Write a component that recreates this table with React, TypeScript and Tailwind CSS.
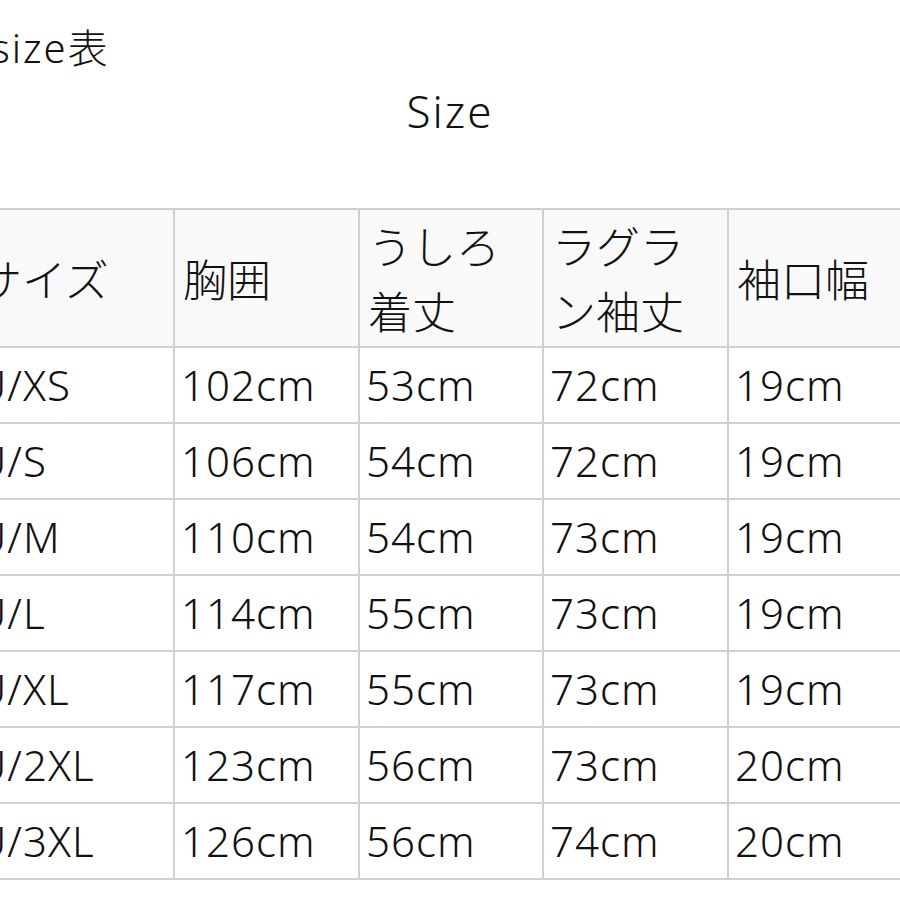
import React from "react";

const headers = ["サイズ", "胸囲", "うしろ着丈", "ラグラン袖丈", "袖口幅"];

const rows = [
  ["U/XS", "102cm", "53cm", "72cm", "19cm"],
  ["U/S", "106cm", "54cm", "72cm", "19cm"],
  ["U/M", "110cm", "54cm", "73cm", "19cm"],
  ["U/L", "114cm", "55cm", "73cm", "19cm"],
  ["U/XL", "117cm", "55cm", "73cm", "19cm"],
  ["U/2XL", "123cm", "56cm", "73cm", "20cm"],
  ["U/3XL", "126cm", "56cm", "74cm", "20cm"],
];

export default function App() {
  return (
    <div className="w-[900px] h-[900px] overflow-hidden bg-white text-[#111] font-light font-['Noto_Sans','Noto_Sans_CJK_JP',sans-serif]">
      {/* page title */}
      <div className="pt-[28px] ml-[-9px] text-[40px] leading-[40px] tracking-[2px]">size表</div>

      {/* caption */}
      <div className="mt-[21px] text-center text-[44px] leading-[44px] tracking-[2px]">Size</div>

      {/* size table */}
      <table className="mt-[75px] ml-[-32px] border-collapse table-fixed w-[945px]">
        <colgroup>
          <col className="w-[205px]" />
          <col className="w-[185px]" />
          <col className="w-[184px]" />
          <col className="w-[185px]" />
          <col className="w-[186px]" />
        </colgroup>
        <thead>
          <tr className="bg-[#f9f9f9]">
            {headers.map((h) => (
              <th
                key={h}
                className="h-[138px] border-2 border-[#d0d0d0] pl-[8px] pr-[8px] text-left align-middle font-light text-[44px] leading-[65px] break-all font-['Noto_Sans_CJK_JP',sans-serif]"
              >
                {h}
              </th>
            ))}
          </tr>
        </thead>
        <tbody>
          {rows.map((r) => (
            <tr key={r[0]}>
              {r.map((c, i) => (
                <td
                  key={i}
                  className="h-[76px] border-2 border-[#d0d0d0] pl-[6px] align-middle text-[42px] leading-[50px] tracking-[1px] whitespace-nowrap"
                >
                  {c}
                </td>
              ))}
            </tr>
          ))}
        </tbody>
      </table>
    </div>
  );
}
